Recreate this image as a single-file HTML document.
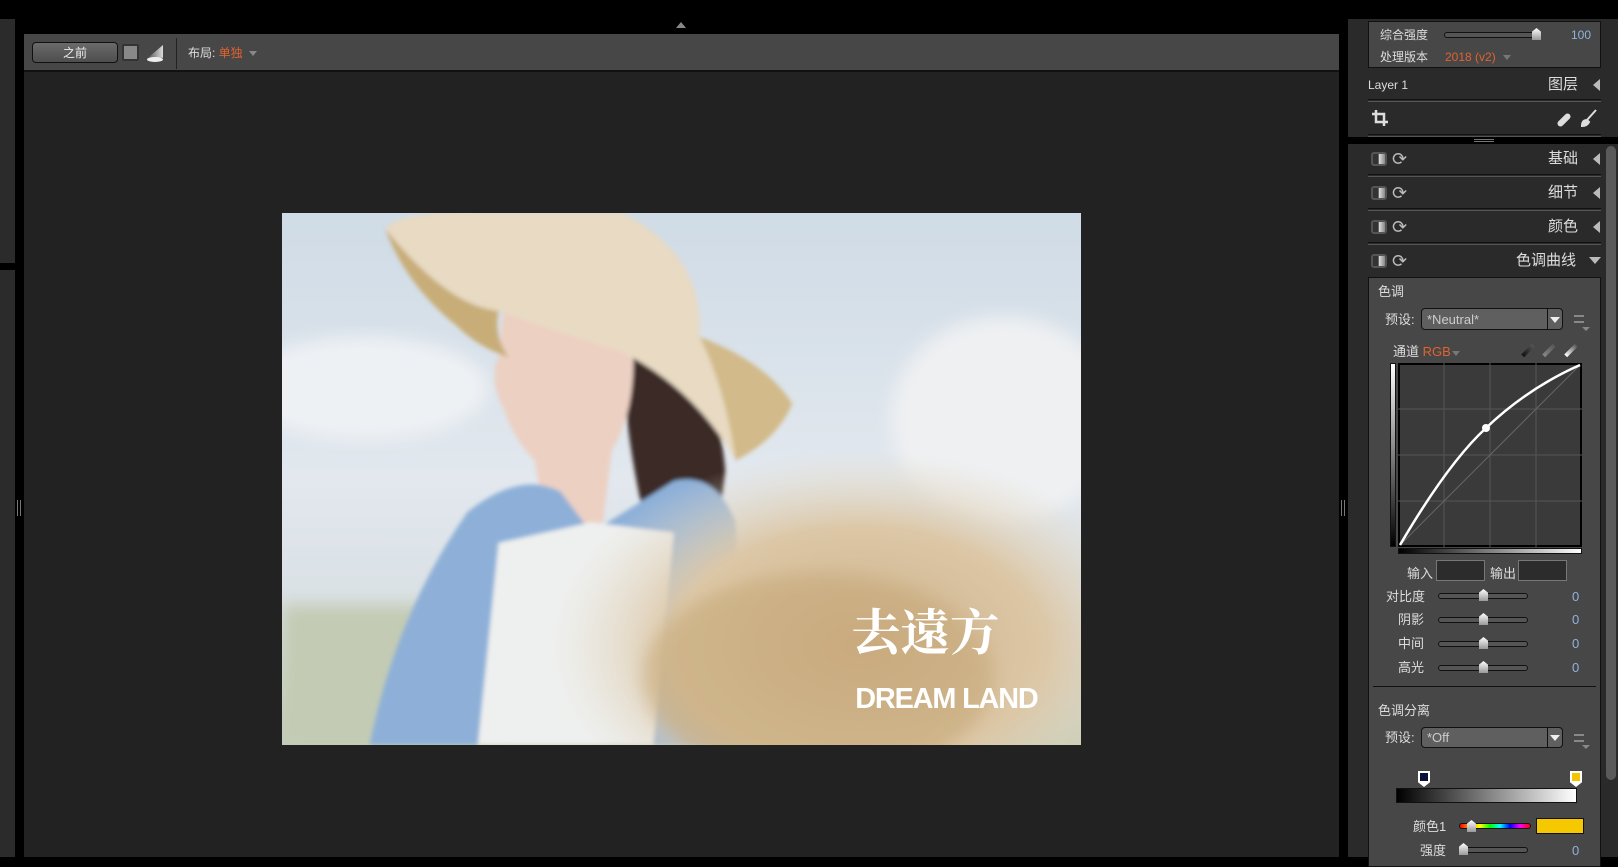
<!DOCTYPE html>
<html><head><meta charset="utf-8"><style>
*{margin:0;padding:0;box-sizing:border-box}
body{width:1618px;height:857px;background:#000;position:relative;overflow:hidden;font-family:"Liberation Sans","Noto Sans CJK SC",sans-serif;font-size:12px;color:#ddd}
.a{position:absolute}
.t{position:absolute;white-space:nowrap;line-height:1}
.sl{position:absolute;height:6px;border-radius:3px;background:#555;border:1px solid #111}
.th{position:absolute;width:9px;height:12px;background:linear-gradient(#fff,#999);clip-path:polygon(50% 0,100% 30%,100% 100%,0 100%,0 30%)}
.sep{position:absolute;height:3px;border-top:1px solid #111;border-bottom:1px solid #555}
.tri{position:absolute;width:0;height:0;border-top:6px solid transparent;border-bottom:6px solid transparent;border-right:7px solid #bbb}
.tog{position:absolute;width:16px;height:14px;border-radius:3px;background:linear-gradient(90deg,#333 0 45%,#ddd 50%,#888);border:2px solid #555}
.blue{color:#8fb3d9}
.or{color:#e0622f}
</style></head><body>
<div class="a" style="left:0;top:19px;width:15px;height:244px;background:#2b2b2b"></div>
<div class="a" style="left:0;top:270px;width:15px;height:587px;background:#2b2b2b"></div>
<div class="a" style="left:17px;top:500px;width:4px;height:16px;border-left:1px solid #777;border-right:1px solid #777"></div>
<div class="a" style="left:676px;top:22px;border-left:5px solid transparent;border-right:5px solid transparent;border-bottom:6px solid #888"></div>
<div class="a" style="left:24px;top:34px;width:1315px;height:823px;background:#222"></div>
<div class="a" style="left:24px;top:34px;width:1315px;height:38px;background:#474747;border-bottom:2px solid #111"></div>
<div class="a" style="left:32px;top:42px;width:86px;height:21px;border-radius:4px;border:1px solid #111;background:linear-gradient(#6a6a6a,#4e4e4e)"></div>
<div class="t" style="left:63px;top:47px;color:#eee">之前</div>
<div class="a" style="left:122px;top:44px;width:17px;height:17px;border:2px solid #333;background:#888;border-radius:2px"></div>
<div class="a" style="left:148px;top:45px;width:15px;height:16px;background:linear-gradient(90deg,#555,#ddd);clip-path:polygon(100% 0,100% 80%,0 80%)"></div>
<div class="a" style="left:147px;top:57px;width:16px;height:5px;border-radius:50%;background:#eee"></div>
<div class="a" style="left:176px;top:38px;width:1px;height:31px;background:#222"></div>
<div class="t" style="left:188px;top:47px;color:#ddd">布局: <span class="or">单独</span></div>
<div class="a" style="left:249px;top:51px;border-left:4px solid transparent;border-right:4px solid transparent;border-top:5px solid #888"></div>
<div class="a" style="left:1341px;top:500px;width:4px;height:16px;border-left:1px solid #777;border-right:1px solid #777"></div>
<!-- photo -->
<svg class="a" style="left:282px;top:213px" width="799" height="532" viewBox="0 0 775 516" preserveAspectRatio="none">
<defs>
<linearGradient id="sky" x1="0" y1="0" x2="0" y2="1"><stop offset="0" stop-color="#cfdbe6"/><stop offset=".5" stop-color="#e2e8ee"/><stop offset=".75" stop-color="#d9e0e4"/><stop offset="1" stop-color="#c2ccb6"/></linearGradient>
<radialGradient id="straw" cx=".5" cy=".5" r=".5"><stop offset="0" stop-color="#cdb089"/><stop offset=".6" stop-color="#dcc7a6"/><stop offset="1" stop-color="#e6dccb" stop-opacity="0"/></radialGradient>
<filter id="b"><feGaussianBlur stdDeviation="8"/></filter>
<filter id="b2"><feGaussianBlur stdDeviation="2"/></filter>
</defs>
<rect width="775" height="516" fill="url(#sky)"/>
<ellipse cx="80" cy="170" rx="120" ry="50" fill="#eef1f4" filter="url(#b)"/>
<ellipse cx="700" cy="200" rx="110" ry="100" fill="#eef0f2" filter="url(#b)"/>
<rect x="0" y="380" width="200" height="136" fill="#c3cbb4" filter="url(#b)"/>
<g filter="url(#b2)">
<!-- hair -->
<path d="M330 120 Q420 130 430 250 L425 290 L350 290 Q330 200 330 120Z" fill="#3b2b25"/>
<!-- face -->
<path d="M215 95 L340 120 Q345 190 320 230 L310 310 L260 320 L245 240 Q225 220 215 190 Q200 160 210 140Z" fill="#ecd0c2"/>
<!-- shirt blue -->
<path d="M180 290 Q230 250 270 270 L300 310 L380 260 Q420 250 440 300 L450 516 L85 516 Q110 390 180 290Z" fill="#8eb0d8"/>
<path d="M210 320 L300 300 L380 310 L360 516 L190 516Z" fill="#eef0ef"/>
<!-- hat -->
<path d="M100 15 Q120 -5 210 0 L330 0 Q410 40 405 120 Q470 145 495 185 Q480 220 440 240 Q400 170 330 135 Q250 110 210 95 Q160 90 100 15Z" fill="#e8dac3"/>
<path d="M100 15 Q160 90 210 95 Q205 120 220 140 Q190 130 170 110 Q120 70 100 15Z" fill="#c8ad78"/>
<path d="M405 120 Q470 145 495 185 Q480 220 440 240 Q430 170 405 120Z" fill="#d2ba8a"/>
</g>
<!-- straw -->
<ellipse cx="560" cy="420" rx="300" ry="190" fill="url(#straw)"/>
<ellipse cx="520" cy="450" rx="170" ry="100" fill="#c6a776" opacity=".55" filter="url(#b)"/>
<text x="552" y="424" font-family="Noto Serif CJK SC,serif" font-size="48" font-weight="bold" fill="#fff">去遠方</text>
<text x="556" y="480" font-family="Liberation Sans,sans-serif" font-size="28" font-weight="bold" fill="#fff" textLength="178">DREAM LAND</text>
</svg>
<!-- right panel -->
<div class="a" style="left:1348px;top:19px;width:270px;height:118px;background:#2a2a2a"></div>
<div class="a" style="left:1348px;top:144px;width:270px;height:713px;background:#2a2a2a"></div>
<div class="a" style="left:1474px;top:139px;width:20px;height:3px;border-top:1px solid #777;border-bottom:1px solid #777"></div>
<div class="a" style="left:1368px;top:21px;width:233px;height:47px;background:#474747;border:1px solid #111"></div>
<div class="t" style="left:1380px;top:29px">综合强度</div>
<div class="sl" style="left:1444px;top:32px;width:96px"></div>
<div class="th" style="left:1532px;top:28px"></div>
<div class="t blue" style="left:1571px;top:29px">100</div>
<div class="t" style="left:1380px;top:51px">处理版本</div>
<div class="t or" style="left:1445px;top:51px">2018 (v2)</div>
<div class="a" style="left:1503px;top:55px;border-left:4px solid transparent;border-right:4px solid transparent;border-top:5px solid #777"></div>
<div class="t" style="left:1368px;top:79px;font-size:12px">Layer 1</div>
<div class="t" style="left:1548px;top:77px;font-size:15px">图层</div>
<div class="tri" style="left:1593px;top:79px"></div>
<div class="sep" style="left:1368px;top:99px;width:233px"></div>
<svg class="a" style="left:1371px;top:109px" width="18" height="18"><path d="M5 1V13H17M1 5H13V17" stroke="#ddd" stroke-width="2.5" fill="none"/></svg>
<div class="a" style="left:1561px;top:112px;width:6px;height:16px;background:#ddd;border-radius:3px;transform:rotate(45deg)"></div>
<svg class="a" style="left:1580px;top:109px" width="18" height="18"><path d="M16 1L7 11M7 11Q2 11 2 17Q7 17 9 13Z" stroke="#ddd" stroke-width="2" fill="#ddd"/></svg>
<div class="sep" style="left:1368px;top:134px;width:233px"></div>
<div class="tog" style="left:1371px;top:152px"></div>
<div class="t" style="left:1392px;top:150px;font-size:18px;color:#bbb">⟳</div>
<div class="t" style="left:1548px;top:151px;font-size:15px">基础</div>
<div class="tri" style="left:1593px;top:153px"></div>
<div class="sep" style="left:1368px;top:174px;width:233px"></div>
<div class="tog" style="left:1371px;top:186px"></div>
<div class="t" style="left:1392px;top:184px;font-size:18px;color:#bbb">⟳</div>
<div class="t" style="left:1548px;top:185px;font-size:15px">细节</div>
<div class="tri" style="left:1593px;top:187px"></div>
<div class="sep" style="left:1368px;top:208px;width:233px"></div>
<div class="tog" style="left:1371px;top:220px"></div>
<div class="t" style="left:1392px;top:218px;font-size:18px;color:#bbb">⟳</div>
<div class="t" style="left:1548px;top:219px;font-size:15px">颜色</div>
<div class="tri" style="left:1593px;top:221px"></div>
<div class="sep" style="left:1368px;top:242px;width:233px"></div>
<div class="tog" style="left:1371px;top:254px"></div>
<div class="t" style="left:1392px;top:252px;font-size:18px;color:#bbb">⟳</div>
<div class="t" style="left:1516px;top:253px;font-size:15px">色调曲线</div>
<div class="a" style="left:1589px;top:257px;border-left:6px solid transparent;border-right:6px solid transparent;border-top:7px solid #bbb"></div>
<div class="a" style="left:1606px;top:146px;width:10px;height:634px;border-radius:5px;background:#5a5a5a"></div>
<div class="a" style="left:1368px;top:277px;width:233px;height:590px;background:#474747;border:1px solid #111"></div>
<div class="t" style="left:1378px;top:285px;font-size:13px">色调</div>
<div class="t" style="left:1385px;top:313px;font-size:13px">预设:</div>
<div class="a" style="left:1421px;top:308px;width:142px;height:22px;background:#5f5f5f;border:1px solid #111;border-radius:4px"></div>
<div class="a" style="left:1547px;top:309px;width:1px;height:20px;background:#111"></div>
<div class="t" style="left:1427px;top:313px;font-size:13px;color:#ccc">*Neutral*</div>
<div class="a" style="left:1550px;top:317px;border-left:5px solid transparent;border-right:5px solid transparent;border-top:6px solid #eee"></div>
<div class="a" style="left:1574px;top:315px;width:10px;height:8px;border-top:2px solid #888;border-bottom:2px solid #888"></div>
<div class="a" style="left:1582px;top:327px;border-left:4px solid transparent;border-right:4px solid transparent;border-top:4px solid #888"></div>
<div class="t" style="left:1393px;top:345px;font-size:13px">通道 <span class="or">RGB</span></div>
<div class="a" style="left:1452px;top:351px;border-left:4px solid transparent;border-right:4px solid transparent;border-top:5px solid #777"></div>
<div class="a" style="left:1526px;top:343px;width:4px;height:15px;background:linear-gradient(#555,#111);transform:rotate(45deg)"></div>
<div class="a" style="left:1547px;top:343px;width:4px;height:15px;background:linear-gradient(#555,#888);transform:rotate(45deg)"></div>
<div class="a" style="left:1569px;top:343px;width:4px;height:15px;background:linear-gradient(#555,#fff);transform:rotate(45deg)"></div>
<div class="a" style="left:1390px;top:363px;width:6px;height:184px;background:linear-gradient(#fff,#000);border:1px solid #111"></div>
<svg class="a" style="left:1398px;top:363px" width="184" height="184">
<rect x="1" y="1" width="182" height="182" fill="#3a3a3a" stroke="#000" stroke-width="2"/>
<g stroke="#555" stroke-width="1"><path d="M46 0V184M92 0V184M138 0V184M0 46H184M0 92H184M0 138H184"/></g>
<path d="M2 182L182 2" stroke="#666" stroke-width="1"/>
<path d="M2 182Q50 100 88 65Q130 25 182 2" stroke="#fff" stroke-width="2.5" fill="none"/>
<circle cx="88" cy="65" r="4" fill="#fff"/>
</svg>
<div class="a" style="left:1398px;top:548px;width:184px;height:6px;background:linear-gradient(90deg,#000,#fff);border:1px solid #111"></div>
<div class="t" style="left:1407px;top:567px;font-size:13px">输入</div>
<div class="a" style="left:1436px;top:560px;width:49px;height:21px;background:#2c2c2c;border:1px solid #777"></div>
<div class="t" style="left:1490px;top:567px;font-size:13px">输出</div>
<div class="a" style="left:1518px;top:560px;width:49px;height:21px;background:#2c2c2c;border:1px solid #777"></div>
<div class="t" style="left:1386px;top:590px;font-size:13px">对比度</div>
<div class="sl" style="left:1438px;top:593px;width:90px"></div><div class="th" style="left:1479px;top:589px"></div>
<div class="t blue" style="left:1572px;top:590px;font-size:13px">0</div>
<div class="t" style="left:1398px;top:613px;font-size:13px">阴影</div>
<div class="sl" style="left:1438px;top:617px;width:90px"></div><div class="th" style="left:1479px;top:613px"></div>
<div class="t blue" style="left:1572px;top:613px;font-size:13px">0</div>
<div class="t" style="left:1398px;top:637px;font-size:13px">中间</div>
<div class="sl" style="left:1438px;top:641px;width:90px"></div><div class="th" style="left:1479px;top:637px"></div>
<div class="t blue" style="left:1572px;top:637px;font-size:13px">0</div>
<div class="t" style="left:1398px;top:661px;font-size:13px">高光</div>
<div class="sl" style="left:1438px;top:665px;width:90px"></div><div class="th" style="left:1479px;top:661px"></div>
<div class="t blue" style="left:1572px;top:661px;font-size:13px">0</div>
<div class="a" style="left:1373px;top:686px;width:223px;height:1px;background:#111"></div>
<div class="t" style="left:1378px;top:704px;font-size:13px">色调分离</div>
<div class="t" style="left:1385px;top:731px;font-size:13px">预设:</div>
<div class="a" style="left:1421px;top:727px;width:142px;height:21px;background:#5f5f5f;border:1px solid #111;border-radius:4px"></div>
<div class="a" style="left:1547px;top:728px;width:1px;height:19px;background:#111"></div>
<div class="t" style="left:1427px;top:731px;font-size:13px;color:#ccc">*Off</div>
<div class="a" style="left:1550px;top:735px;border-left:5px solid transparent;border-right:5px solid transparent;border-top:6px solid #eee"></div>
<div class="a" style="left:1574px;top:734px;width:10px;height:8px;border-top:2px solid #888;border-bottom:2px solid #888"></div>
<div class="a" style="left:1582px;top:745px;border-left:4px solid transparent;border-right:4px solid transparent;border-top:4px solid #888"></div>
<div class="a" style="left:1418px;top:771px;width:12px;height:16px;background:#fff;clip-path:polygon(0 0,100% 0,100% 70%,50% 100%,0 70%)"></div>
<div class="a" style="left:1420px;top:773px;width:8px;height:8px;background:#0b1040"></div>
<div class="a" style="left:1570px;top:771px;width:12px;height:16px;background:#fff;clip-path:polygon(0 0,100% 0,100% 70%,50% 100%,0 70%)"></div>
<div class="a" style="left:1572px;top:773px;width:8px;height:8px;background:#f5c400"></div>
<div class="a" style="left:1396px;top:788px;width:181px;height:15px;background:linear-gradient(90deg,#000,#fff);border:1px solid #111"></div>
<div class="t" style="left:1413px;top:820px;font-size:13px">颜色1</div>
<div class="a" style="left:1459px;top:823px;width:72px;height:6px;border-radius:3px;border:1px solid #111;background:linear-gradient(90deg,red,orange,yellow,lime,cyan,blue,magenta,red)"></div>
<div class="th" style="left:1467px;top:820px"></div>
<div class="a" style="left:1536px;top:818px;width:48px;height:16px;background:#f6c800;border:1px solid #111"></div>
<div class="t" style="left:1420px;top:844px;font-size:13px">强度</div>
<div class="sl" style="left:1461px;top:847px;width:67px"></div><div class="th" style="left:1459px;top:843px"></div>
<div class="t blue" style="left:1572px;top:844px;font-size:13px">0</div>
</body></html>
